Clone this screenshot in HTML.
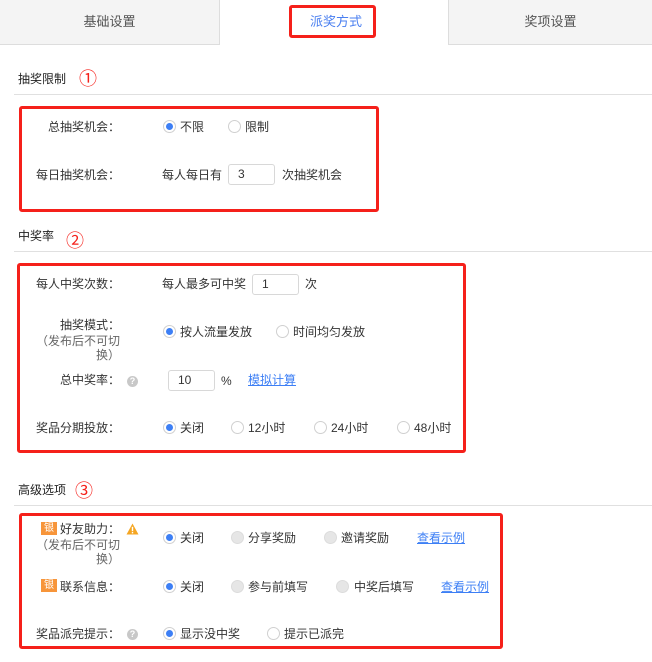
<!DOCTYPE html>
<html><head><meta charset="utf-8"><style>
*{margin:0;padding:0;box-sizing:border-box}
body{width:652px;height:662px;background:#fff;font-family:"Liberation Sans","Noto Sans CJK SC",sans-serif;font-size:12px;color:#333;position:relative;overflow:hidden}
.a{position:absolute;white-space:nowrap;line-height:14px}
.tab{position:absolute;top:0;height:45px;line-height:44px;text-align:center;font-size:13px;color:#555}
.red{position:absolute;border:3px solid #f5201a;border-radius:3px}
.line{position:absolute;left:14px;right:0;height:1px;background:#e0e0e0}
.h{position:absolute;font-size:12px;color:#222;line-height:14px}
.num{position:absolute;color:#f5201a;font-size:18px;line-height:18px}
.lab{position:absolute;text-align:right;width:120px;left:0;line-height:14px}
.r{position:absolute;width:13px;height:13px;border-radius:50%;border:1px solid #d0d0d0;background:#fff}
.r.on::after{content:"";position:absolute;left:2px;top:2px;width:7px;height:7px;border-radius:50%;background:#3d7ff5}
.r.dis{background:#e6e6e6;border-color:#dcdcdc}
.in{position:absolute;height:21px;border:1px solid #d8d8d8;border-radius:3px;padding-left:9px;line-height:19px}
.lk{position:absolute;color:#3d7ff5;text-decoration:underline;line-height:14px}
.q{position:absolute;width:11px;height:11px;border-radius:50%;background:#c8c8c8;color:#fff;font-size:9px;line-height:11px;text-align:center;font-weight:bold}
.bd{position:absolute;width:16px;height:13px;background:#f7953a;color:#fff;font-size:10px;line-height:13px;text-align:center}
.sub{position:absolute;text-align:right;color:#666;line-height:14px}
</style></head><body>
<div class="tab" style="left:0;width:220px;background:#f4f4f4;border-right:1px solid #ddd;border-bottom:1px solid #ddd">基础设置</div>
<div class="tab" style="left:220px;width:228px;background:#fff;color:#4a7ff0;padding-left:4px">派奖方式</div>
<div class="tab" style="left:448px;width:204px;background:#f4f4f4;border-left:1px solid #ddd;border-bottom:1px solid #ddd">奖项设置</div>
<div class="red" style="left:289px;top:5px;width:87px;height:33px"></div>

<div class="h" style="left:18px;top:72px">抽奖限制</div>
<div class="num" style="left:79px;top:70px">①</div>
<div class="line" style="top:94px"></div>
<div class="red" style="left:19px;top:106px;width:360px;height:106px"></div>
<div class="lab" style="top:120px">总抽奖机会：</div>
<div class="r on" style="left:163px;top:120px"></div><div class="a" style="left:180px;top:120px">不限</div>
<div class="r" style="left:228px;top:120px"></div><div class="a" style="left:245px;top:120px">限制</div>
<div class="lab" style="top:168px">每日抽奖机会：</div>
<div class="a" style="left:162px;top:168px">每人每日有</div>
<div class="in" style="left:228px;top:164px;width:47px">3</div>
<div class="a" style="left:282px;top:168px">次抽奖机会</div>

<div class="h" style="left:18px;top:229px">中奖率</div>
<div class="num" style="left:66px;top:232px">②</div>
<div class="line" style="top:251px"></div>
<div class="red" style="left:17px;top:263px;width:449px;height:190px"></div>
<div class="lab" style="top:277px">每人中奖次数：</div>
<div class="a" style="left:162px;top:277px">每人最多可中奖</div>
<div class="in" style="left:252px;top:274px;width:47px">1</div>
<div class="a" style="left:305px;top:277px">次</div>
<div class="lab" style="top:318px">抽奖模式：</div>
<div class="sub" style="left:0;width:120px;top:334px;color:#666">（发布后不可切</div>
<div class="sub" style="left:0;width:120px;top:348px">换）</div>
<div class="r on" style="left:163px;top:325px"></div><div class="a" style="left:180px;top:325px">按人流量发放</div>
<div class="r" style="left:276px;top:325px"></div><div class="a" style="left:293px;top:325px">时间均匀发放</div>
<div class="lab" style="top:373px">总中奖率：</div><div class="q" style="left:127px;top:376px">?</div>
<div class="in" style="left:168px;top:370px;width:47px">10</div>
<div class="a" style="left:221px;top:374px">%</div>
<div class="lk" style="left:248px;top:373px">模拟计算</div>
<div class="lab" style="top:421px">奖品分期投放：</div>
<div class="r on" style="left:163px;top:421px"></div><div class="a" style="left:180px;top:421px">关闭</div>
<div class="r" style="left:231px;top:421px"></div><div class="a" style="left:248px;top:421px">12小时</div>
<div class="r" style="left:314px;top:421px"></div><div class="a" style="left:331px;top:421px">24小时</div>
<div class="r" style="left:397px;top:421px"></div><div class="a" style="left:414px;top:421px">48小时</div>

<div class="h" style="left:18px;top:483px">高级选项</div>
<div class="num" style="left:75px;top:482px">③</div>
<div class="line" style="top:505px"></div>
<div class="red" style="left:19px;top:513px;width:484px;height:136px"></div>
<div class="bd" style="left:41px;top:522px">银</div>
<div class="lab" style="top:522px">好友助力：</div>
<svg style="position:absolute;left:126px;top:523px" width="13" height="12" viewBox="0 0 13 12"><path d="M6.5 0.5 L12.5 11.5 L0.5 11.5 Z" fill="#f5a623"/><rect x="5.8" y="3.8" width="1.4" height="4.4" fill="#fff"/><rect x="5.8" y="9" width="1.4" height="1.4" fill="#fff"/></svg>
<div class="sub" style="left:0;width:120px;top:538px">（发布后不可切</div>
<div class="sub" style="left:0;width:120px;top:552px">换）</div>
<div class="r on" style="left:163px;top:531px"></div><div class="a" style="left:180px;top:531px">关闭</div>
<div class="r dis" style="left:231px;top:531px"></div><div class="a" style="left:248px;top:531px">分享奖励</div>
<div class="r dis" style="left:324px;top:531px"></div><div class="a" style="left:341px;top:531px">邀请奖励</div>
<div class="lk" style="left:417px;top:531px">查看示例</div>
<div class="bd" style="left:41px;top:579px">银</div>
<div class="lab" style="top:580px">联系信息：</div>
<div class="r on" style="left:163px;top:580px"></div><div class="a" style="left:180px;top:580px">关闭</div>
<div class="r dis" style="left:231px;top:580px"></div><div class="a" style="left:248px;top:580px">参与前填写</div>
<div class="r dis" style="left:336px;top:580px"></div><div class="a" style="left:354px;top:580px">中奖后填写</div>
<div class="lk" style="left:441px;top:580px">查看示例</div>
<div class="lab" style="top:627px">奖品派完提示：</div><div class="q" style="left:127px;top:629px">?</div>
<div class="r on" style="left:163px;top:627px"></div><div class="a" style="left:180px;top:627px">显示没中奖</div>
<div class="r" style="left:267px;top:627px"></div><div class="a" style="left:284px;top:627px">提示已派完</div>
</body></html>
